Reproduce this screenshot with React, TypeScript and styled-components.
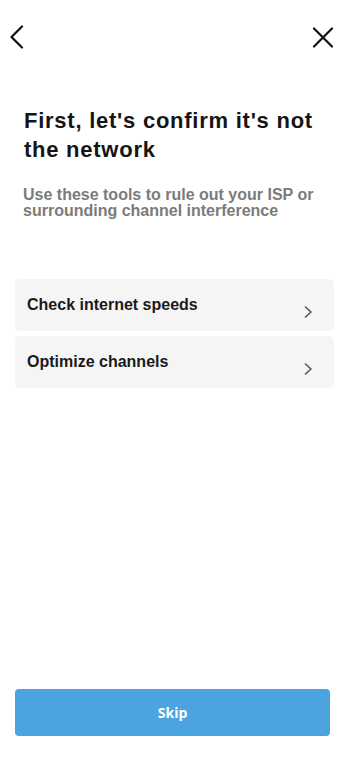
import React from "react";
import styled, { createGlobalStyle } from "styled-components";

const Global = createGlobalStyle`
  html, body { margin: 0; padding: 0; background: #ffffff; }
  * { box-sizing: border-box; }
`;

const Page = styled.div`
  width: 355px;
  height: 763px;
  display: flex;
  flex-direction: column;
  background: #ffffff;
  font-family: "Liberation Sans", Arial, sans-serif;
  color: #1a1a1a;
`;

const TopBar = styled.div`
  display: flex;
  justify-content: space-between;
  align-items: flex-start;
  padding: 25px 21px 0 9px;
  height: 106px;
`;

const IconButton = styled.button<{ $offset?: number }>`
  border: none;
  background: none;
  padding: 0;
  margin-top: ${(p) => p.$offset ?? 0}px;
  display: flex;
  cursor: pointer;
`;

const Intro = styled.div`
  padding: 0 18px 0 24px;
  display: flex;
  flex-direction: column;
  gap: 23px;
`;

const Title = styled.h1`
  margin: 0;
  font-size: 22px;
  line-height: 29px;
  letter-spacing: 0.75px;
  font-weight: 700;
  color: #151515;
`;

const Subtitle = styled.p`
  margin: 0 0 0 -1px;
  font-size: 16px;
  line-height: 16px;
  font-weight: 700;
  color: #7b7b7b;
`;

const List = styled.div`
  margin: 60px 21px 0 15px;
  display: flex;
  flex-direction: column;
  gap: 5px;
`;

const Card = styled.div`
  height: 52px;
  background: #f5f5f5;
  border-radius: 5px;
  padding: 17px 21px 0 12px;
  display: flex;
  justify-content: space-between;
  align-items: flex-start;
  cursor: pointer;
`;

const CardLabel = styled.span`
  font-size: 16px;
  line-height: 18px;
  font-weight: 700;
  color: #1a1a1a;
`;

const Chevron = styled.svg`
  margin-top: 10px;
`;

const Footer = styled.div`
  margin-top: auto;
  padding: 0 25px 27px 15px;
`;

const SkipButton = styled.button`
  width: 100%;
  height: 47px;
  border: none;
  border-radius: 4px;
  background: #4ba4df;
  color: #ffffff;
  font-family: "Open Sans", "Noto Sans", sans-serif;
  font-weight: 700;
  font-size: 14px;
  cursor: pointer;
`;

const items = ["Check internet speeds", "Optimize channels"];

export default function App() {
  return (
    <>
      <Global />
      <Page>
        <TopBar>
          <IconButton aria-label="Back">
            <svg width="16" height="24" viewBox="0 0 16 24">
              <path d="M13 1.5 L2.5 12 L13 22.5" fill="none" stroke="#111" strokeWidth="2.2" strokeLinecap="round" strokeLinejoin="round" />
            </svg>
          </IconButton>
          <IconButton aria-label="Close" $offset={2}>
            <svg width="22" height="21" viewBox="0 0 22 21">
              <path d="M2 1.5 L20 19.5 M20 1.5 L2 19.5" fill="none" stroke="#111" strokeWidth="2.2" strokeLinecap="round" />
            </svg>
          </IconButton>
        </TopBar>
        <Intro>
          <Title>First, let's confirm it's not the network</Title>
          <Subtitle>Use these tools to rule out your ISP or surrounding channel interference</Subtitle>
        </Intro>
        <List>
          {items.map((label) => (
            <Card key={label}>
              <CardLabel>{label}</CardLabel>
              <Chevron width="9" height="12" viewBox="0 0 9 12">
                <path d="M1.5 1 L7 6 L1.5 11" fill="none" stroke="#555" strokeWidth="1.6" strokeLinecap="round" strokeLinejoin="round" />
              </Chevron>
            </Card>
          ))}
        </List>
        <Footer>
          <SkipButton>Skip</SkipButton>
        </Footer>
      </Page>
    </>
  );
}
